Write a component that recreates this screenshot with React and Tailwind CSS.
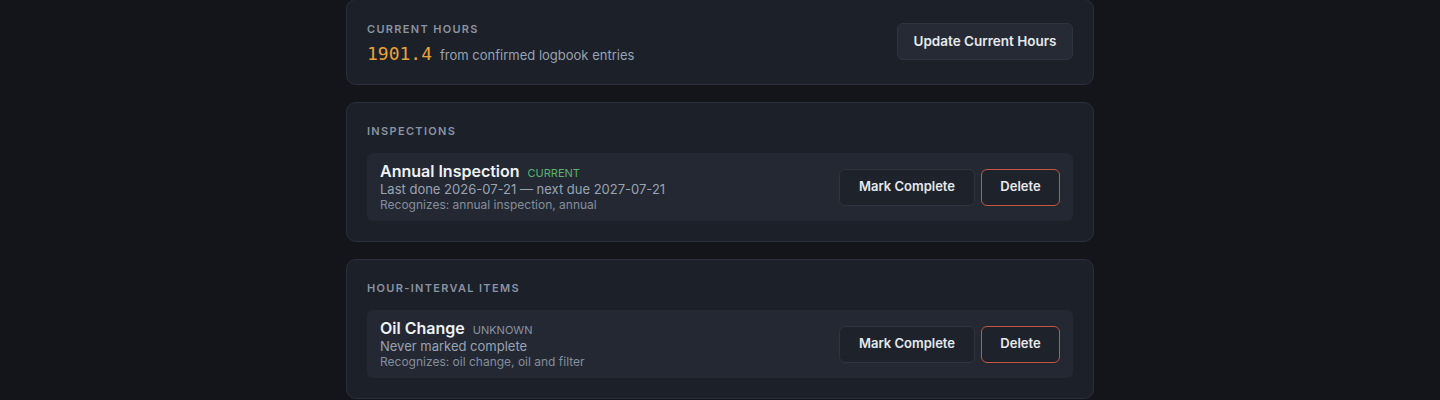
import React from "react";

const sans = { fontFamily: "Inter, 'Noto Sans', sans-serif" };

function Label({ children }) {
  return (
    <div className="text-[11px] leading-4 font-semibold tracking-[0.12em] uppercase text-[#8a93a3]">
      {children}
    </div>
  );
}

function Item({ title, status, statusClass, line1, line2 }) {
  return (
    <div className="mt-[14px] flex items-center justify-between rounded-md bg-[#232833] px-[13px] py-2">
      <div>
        <div className="flex items-baseline gap-2">
          <span className="text-[16px] leading-5 font-semibold text-[#eef1f5]">{title}</span>
          <span className={"text-[11px] leading-4 uppercase " + statusClass}>{status}</span>
        </div>
        <div className="text-[13px] leading-4 text-[#9aa3b2]">{line1}</div>
        <div className="text-[12px] leading-4 text-[#858e9c]">{line2}</div>
      </div>
      <div className="flex gap-1.5">
        <button className="h-[37px] w-[136px] rounded-md border border-[#2e353f] bg-[#1e222b] text-[13px] font-semibold text-[#e6e9ee]">
          Mark Complete
        </button>
        <button className="h-[37px] w-[79px] rounded-md border border-[#c4573f] bg-[#1e222b] text-[13px] font-semibold text-[#e6e9ee]">
          Delete
        </button>
      </div>
    </div>
  );
}

export default function App() {
  return (
    <div className="min-h-[400px] bg-[#13151b] overflow-hidden" style={sans}>
      <div className="mx-auto w-[748px] -mt-px flex flex-col gap-[17px]">
        <div className="rounded-[10px] border border-[#2a303b] bg-[#1c2029] px-5 pt-[21px] pb-[16px] flex items-start justify-between">
          <div>
            <Label>Current Hours</Label>
            <div className="mt-[4px] flex items-baseline gap-2 leading-[26px]">
              <span
                className="text-[18px] text-[#e9a23b]"
                style={{ fontFamily: "'DejaVu Sans Mono', 'Liberation Mono', monospace" }}
              >
                1901.4
              </span>
              <span className="text-[13px] text-[#9aa3b2]">from confirmed logbook entries</span>
            </div>
          </div>
          <button className="mt-[2px] h-[37px] w-[176px] rounded-md border border-[#2e353f] bg-[#252a35] text-[13.5px] font-semibold text-[#e6e9ee]">
            Update Current Hours
          </button>
        </div>

        <div className="rounded-[10px] border border-[#2a303b] bg-[#1c2029] p-5">
          <Label>Inspections</Label>
          <Item
            title="Annual Inspection"
            status="Current"
            statusClass="text-[#5fb26c]"
            line1="Last done 2026-07-21 — next due 2027-07-21"
            line2="Recognizes: annual inspection, annual"
          />
        </div>

        <div className="rounded-[10px] border border-[#2a303b] bg-[#1c2029] p-5">
          <Label>Hour-Interval Items</Label>
          <Item
            title="Oil Change"
            status="Unknown"
            statusClass="text-[#8a93a3]"
            line1="Never marked complete"
            line2="Recognizes: oil change, oil and filter"
          />
        </div>
      </div>
    </div>
  );
}
